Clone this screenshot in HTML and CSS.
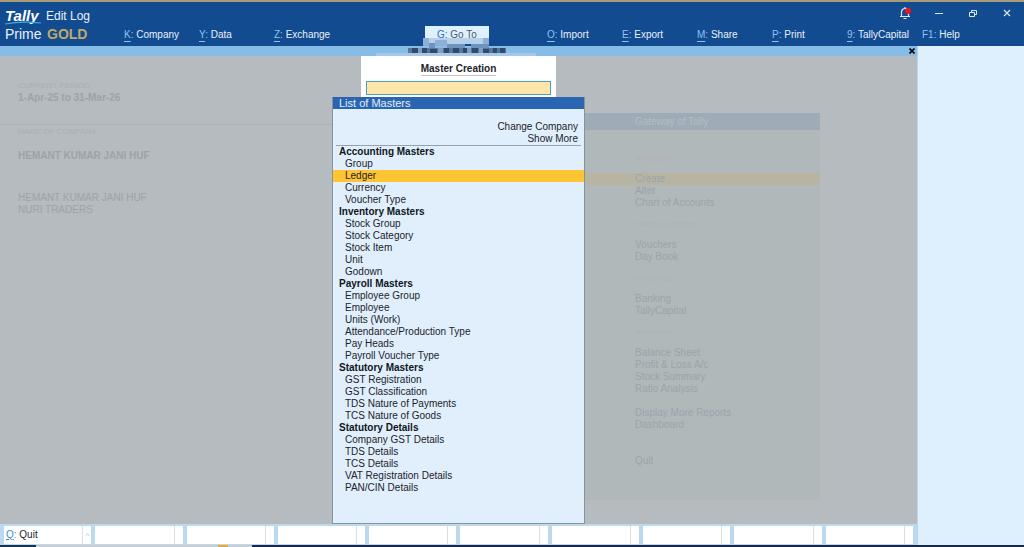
FILE: index.html
```html
<!DOCTYPE html>
<html lang="en">
<head>
    <meta charset="UTF-8">
    <meta name="viewport" content="width=device-width, initial-scale=1.0">
    <title>TallyPrime Gold</title>
    <link rel="stylesheet" href="styles.css">
</head>
<body>
    <!-- Top bar -->
    <header class="topbar">
        <div class="brand">
            <div class="brand-row">
                <span class="brand-tally">Tally
                    <svg class="swoosh" viewBox="0 0 36 4" aria-hidden="true"><path d="M0 3Q16 0 36 2" fill="none" stroke="#35b4de" stroke-width="1.200"/></svg>
                </span>
                <span class="brand-edit">Edit Log</span>
            </div>
            <div class="brand-row">
                <span class="brand-prime">Prime</span>
                <span class="brand-gold">GOLD</span>
            </div>
        </div>
        <div class="topbar-main">
            <div class="window-controls">
                <button class="win-btn" aria-label="Notifications">
                    <svg width="14" height="14" viewBox="0 0 14 14"><path d="M2 10.500h10M3.500 10.500V6a3.500 3.500 0 0 1 7 0v4.500M7 2.500V1M5.500 12.500h3" fill="none" stroke="#dbe8f6" stroke-width="1.200"/><circle cx="10" cy="5" r="3" fill="#f5121b"/></svg>
                </button>
                <button class="win-btn" aria-label="Minimise">
                    <svg width="10" height="10" viewBox="0 0 10 10"><path d="M1 5.500h8" stroke="#dbe8f6"/></svg>
                </button>
                <button class="win-btn" aria-label="Restore">
                    <svg width="10" height="10" viewBox="0 0 10 10"><path d="M1.500 4.500h5v4h-5zM3.500 4.500v-2h5v4h-2" fill="none" stroke="#dbe8f6"/></svg>
                </button>
                <button class="win-btn" aria-label="Close">
                    <svg width="10" height="10" viewBox="0 0 10 10"><path d="M2 2l6 6M8 2l-6 6" stroke="#dbe8f6" stroke-width="1.200"/></svg>
                </button>
            </div>
            <nav class="menu">
                <button class="menu-item"><u>K</u><i>:</i> Company</button>
                <button class="menu-item"><u>Y</u><i>:</i> Data</button>
                <button class="menu-item"><u>Z</u><i>:</i> Exchange</button>
                <button class="menu-item active"><u>G</u><i>:</i> Go To</button>
                <button class="menu-item"><u>O</u><i>:</i> Import</button>
                <button class="menu-item"><u>E</u><i>:</i> Export</button>
                <button class="menu-item"><u>M</u><i>:</i> Share</button>
                <button class="menu-item"><u>P</u><i>:</i> Print</button>
                <button class="menu-item"><u>9</u><i>:</i> TallyCapital</button>
                <button class="menu-item"><i>F1:</i> Help</button>
            </nav>
        </div>
    </header>

    <div class="content">
        <main class="desk">
            <div class="strip">
                <!-- Pixelated company name -->
                <svg class="mosaic" width="160" height="20" viewBox="0 0 160 20" aria-hidden="true">
                    <path fill="#b9d0ea" d="M47 2h66v6H47z"/>
                    <path fill="#8fb0d6" d="M47 2h6v8h-6zM59 4h12v6H59zM107 2h6v6h-6z"/>
                    <path fill="#6f93bd" d="M53 7h6v5h-6zM71 8h18v4H71zM95 8h18v4H95z"/>
                    <path fill="#a5c8ea" d="M0 17h160v3H0z"/>
                    <path fill="#56779c" d="M32 12h98v5H32z"/>
                    <path fill="#2f4a6c" d="M36 12h6v5h-6zM46 12h5v5h-5zM54 13h7v4h-7zM68 12h5v5h-5zM77 12h6v5h-6zM87 12h4v5h-4zM96 12h6v5h-6zM107 13h6v4h-6zM117 12h4v5h-4zM124 12h5v5h-5z"/>
                    <path fill="#7d9fc4" d="M42 12h4v5h-4zM62 12h5v5h-5zM91 12h4v5h-4zM103 12h4v5h-4z"/>
                </svg>
                <button class="strip-close" aria-label="Close screen">
                    <svg width="6" height="6" viewBox="0 0 6 6"><path d="M0.500 0.500l5 5M5.500 0.500l-5 5" stroke="#000" stroke-width="1.600"/></svg>
                </button>
            </div>

            <div class="workspace">
                <!-- Dimmed home screen -->
                <section class="company">
                    <div class="period">
                        <h2>CURRENT PERIOD</h2>
                        <p class="strong">1-Apr-25 to 31-Mar-26</p>
                    </div>
                    <div class="names">
                        <h2>NAME OF COMPANY</h2>
                        <p class="strong">HEMANT KUMAR JANI HUF</p>
                        <ul>
                            <li>HEMANT KUMAR JANI HUF</li>
                            <li>NURI TRADERS</li>
                        </ul>
                    </div>
                </section>
                <section class="gateway">
                    <h1>Gateway of Tally</h1>
                    <h2>MASTERS</h2>
                    <ul>
                        <li class="current">Create</li>
                        <li>Alter</li>
                        <li>Chart of Accounts</li>
                    </ul>
                    <h2>TRANSACTIONS</h2>
                    <ul>
                        <li>Vouchers</li>
                        <li>Day Book</li>
                    </ul>
                    <h2>UTILITIES</h2>
                    <ul>
                        <li>Banking</li>
                        <li>TallyCapital</li>
                    </ul>
                    <h2>REPORTS</h2>
                    <ul>
                        <li>Balance Sheet</li>
                        <li>Profit &amp; Loss A/c</li>
                        <li>Stock Summary</li>
                        <li>Ratio Analysis</li>
                    </ul>
                    <ul class="spaced">
                        <li>Display More Reports</li>
                        <li>Dashboard</li>
                    </ul>
                    <ul class="last">
                        <li>Quit</li>
                    </ul>
                </section>

                <!-- Master creation popup -->
                <div class="popup">
                    <div class="creation">
                        <label for="master">Master Creation</label>
                        <input type="text" id="master">
                    </div>
                    <div class="masters">
                        <h2>List of Masters</h2>
                        <div class="actions">
                            <a href="#">Change Company</a>
                            <a href="#">Show More</a>
                        </div>
                        <h3>Accounting Masters</h3>
                        <ul>
                            <li>Group</li>
                            <li class="selected">Ledger</li>
                            <li>Currency</li>
                            <li>Voucher Type</li>
                        </ul>
                        <h3>Inventory Masters</h3>
                        <ul>
                            <li>Stock Group</li>
                            <li>Stock Category</li>
                            <li>Stock Item</li>
                            <li>Unit</li>
                            <li>Godown</li>
                        </ul>
                        <h3>Payroll Masters</h3>
                        <ul>
                            <li>Employee Group</li>
                            <li>Employee</li>
                            <li>Units (Work)</li>
                            <li>Attendance/Production Type</li>
                            <li>Pay Heads</li>
                            <li>Payroll Voucher Type</li>
                        </ul>
                        <h3>Statutory Masters</h3>
                        <ul>
                            <li>GST Registration</li>
                            <li>GST Classification</li>
                            <li>TDS Nature of Payments</li>
                            <li>TCS Nature of Goods</li>
                        </ul>
                        <h3>Statutory Details</h3>
                        <ul>
                            <li>Company GST Details</li>
                            <li>TDS Details</li>
                            <li>TCS Details</li>
                            <li>VAT Registration Details</li>
                            <li>PAN/CIN Details</li>
                        </ul>
                    </div>
                </div>
            </div>

            <div class="buttonbar">
                <div class="cell"><button><u>Q</u><i>:</i> Quit</button><span>^</span></div>
                <div class="cell"><button aria-label="Empty"></button><span></span></div>
                <div class="cell"><button aria-label="Empty"></button><span></span></div>
                <div class="cell"><button aria-label="Empty"></button><span></span></div>
                <div class="cell"><button aria-label="Empty"></button><span></span></div>
                <div class="cell"><button aria-label="Empty"></button><span></span></div>
                <div class="cell"><button aria-label="Empty"></button><span></span></div>
                <div class="cell"><button aria-label="Empty"></button><span></span></div>
                <div class="cell"><button aria-label="Empty"></button><span></span></div>
                <div class="cell"><button aria-label="Empty"></button><span></span></div>
            </div>
        </main>
        <aside class="sidebar"></aside>
    </div>

    <footer class="taskbar"></footer>
</body>
</html>
```
FILE: styles.css
```css
* {
    margin: 0;
    padding: 0;
    box-sizing: border-box;
}

body {
    min-height: 100vh;
    display: flex;
    flex-direction: column;
    background: #def0fd;
    font-family: "Liberation Sans", Arial, sans-serif;
    font-size: 10px;
    line-height: 12px;
    color: #1c232b;
}

ul {
    list-style: none;
}

button {
    border: none;
    background: none;
    font: inherit;
    color: inherit;
    cursor: pointer;
}

i {
    font-style: normal;
}

/* Top bar */
.topbar {
    display: flex;
    height: 46px;
    border-top: 2px solid #a89c78;
    background: #134b91;
    color: #e8f1fa;
}

.brand {
    flex: none;
    width: 124px;
    padding: 5px 0 0 5px;
}

.brand-row {
    display: flex;
    gap: 5px;
    height: 18px;
    line-height: 18px;
    font-size: 14px;
}

.brand-tally {
    position: relative;
    width: 36px;
    font-size: 15px;
    font-style: italic;
    font-weight: bold;
    color: #fff;
}

.swoosh {
    position: absolute;
    left: 0;
    bottom: 0;
    width: 36px;
    height: 4px;
}

.brand-edit {
    font-size: 12px;
}

.brand-prime {
    width: 37px;
}

.brand-gold {
    font-weight: bold;
    color: #bfa968;
}

.topbar-main {
    flex: 1;
    display: flex;
    flex-direction: column;
    justify-content: space-between;
}

.window-controls {
    display: flex;
    justify-content: flex-end;
    height: 22px;
}

.win-btn {
    width: 34px;
    display: flex;
    align-items: center;
    justify-content: center;
}

.menu {
    display: grid;
    grid-template-columns: 75fr 75fr 151fr 122fr 75fr 75fr 75fr 75fr 75fr 102fr;
    height: 20px;
}

.menu-item {
    justify-self: start;
    height: 17px;
    line-height: 17px;
    text-align: left;
    white-space: nowrap;
}

.menu-item u,
.menu-item i {
    color: #8fc3ee;
}

.menu-item u {
    text-underline-offset: 3px;
}

.menu-item.active {
    padding: 0 12px;
    background: #def0fd;
    color: #4a5a6c;
}

.menu-item.active u,
.menu-item.active i {
    color: #2a6cb8;
}

/* Work area */
.content {
    flex: 1;
    display: flex;
}

.desk {
    flex: 1;
    display: flex;
    flex-direction: column;
}

.sidebar {
    width: 107px;
    border-left: 1px solid #b4d4ee;
    background: #def0fd;
}

.strip {
    position: relative;
    display: flex;
    justify-content: flex-end;
    height: 10px;
    padding-right: 2px;
    background: #87bce6;
}

.mosaic {
    position: absolute;
    left: 41%;
    bottom: 0;
}

.strip-close {
    display: flex;
    align-items: center;
}

.workspace {
    position: relative;
    flex: 1;
    display: flex;
    justify-content: space-between;
    background: #b5bbbe;
    color: #9ba4aa;
}

.workspace h2 {
    font-weight: normal;
}

.strong {
    font-weight: bold;
}

.company {
    width: 335px;
}

.company h2 {
    font-size: 8px;
    color: #a5b1b9;
}

.period {
    height: 69px;
    padding: 24px 18px 0;
    border-bottom: 1px solid #a9b3b9;
}

.names {
    padding: 1px 18px;
}

.names .strong {
    margin: 12px 0 30px;
}

.gateway {
    width: 320px;
    margin: 57px 97px 24px 0;
    background: #b0b8ba;
}

.gateway h1 {
    height: 17px;
    padding-left: 135px;
    line-height: 17px;
    font-size: 10px;
    font-weight: normal;
    background: #9facb7;
    color: #b2bcc3;
}

.gateway h2 {
    padding: 10px 0 8px 135px;
    font-size: 8px;
    line-height: 12px;
    color: #abb4b7;
}

.gateway h1 + h2 {
    padding-top: 23px;
}

.gateway li {
    padding-left: 135px;
}

.gateway .current {
    background: #b7b5a2;
}

.gateway .spaced {
    margin-top: 12px;
}

.gateway .last {
    margin-top: 24px;
}

/* Popup */
.popup {
    position: absolute;
    inset: 0;
    display: flex;
    flex-direction: column;
    align-items: center;
    color: #1c232b;
}

.creation {
    width: 195px;
    height: 41px;
    padding: 7px 5px 0;
    background: #fff;
    text-align: center;
}

.creation label {
    display: table;
    margin: 0 auto 5px;
    border-bottom: 1px solid #c3c3c3;
    font-weight: bold;
}

.creation input {
    display: block;
    width: 100%;
    height: 14px;
    border: 1px solid #4a9fc0;
    background: #fee5a9;
}

.masters {
    flex: 1;
    width: 253px;
    border: 1px solid #84949f;
    border-top: none;
    background: #e0effb;
}

.masters h2 {
    height: 12px;
    padding-left: 6px;
    font-size: 11px;
    background: #2a65b2;
    color: #e3eefa;
}

.actions {
    display: flex;
    flex-direction: column;
    align-items: flex-end;
    margin: 0 3px;
    padding: 12px 3px 0;
    border-bottom: 1px solid #97a2ac;
}

.actions a {
    color: inherit;
    text-decoration: none;
}

.masters h3 {
    padding-left: 6px;
    font-size: 10px;
    color: #10161c;
}

.masters li {
    padding-left: 12px;
}

.masters .selected {
    background: #ffc431;
}

/* Bottom buttons */
.buttonbar {
    display: flex;
    gap: 4px;
    height: 21px;
    padding: 2px 4px 1px;
    background: #bcd9f0;
}

.cell {
    flex: 1;
    display: flex;
    background: #fff;
}

.cell button {
    flex: 1;
    padding-left: 2px;
    text-align: left;
}

.cell u,
.cell i {
    color: #3a8fd0;
}

.cell span {
    width: 9px;
    border-left: 1px solid #dcdfe2;
    font-size: 8px;
    line-height: 20px;
    text-align: center;
    color: #b4babf;
}

.taskbar {
    height: 2px;
    background: linear-gradient(to right, #16334f 36px, #c8cdd2 36px, #c8cdd2 218px, #e8a83c 218px, #e8a83c 228px, #c8cdd2 228px, #c8cdd2 252px, #16294a 252px);
}
```
